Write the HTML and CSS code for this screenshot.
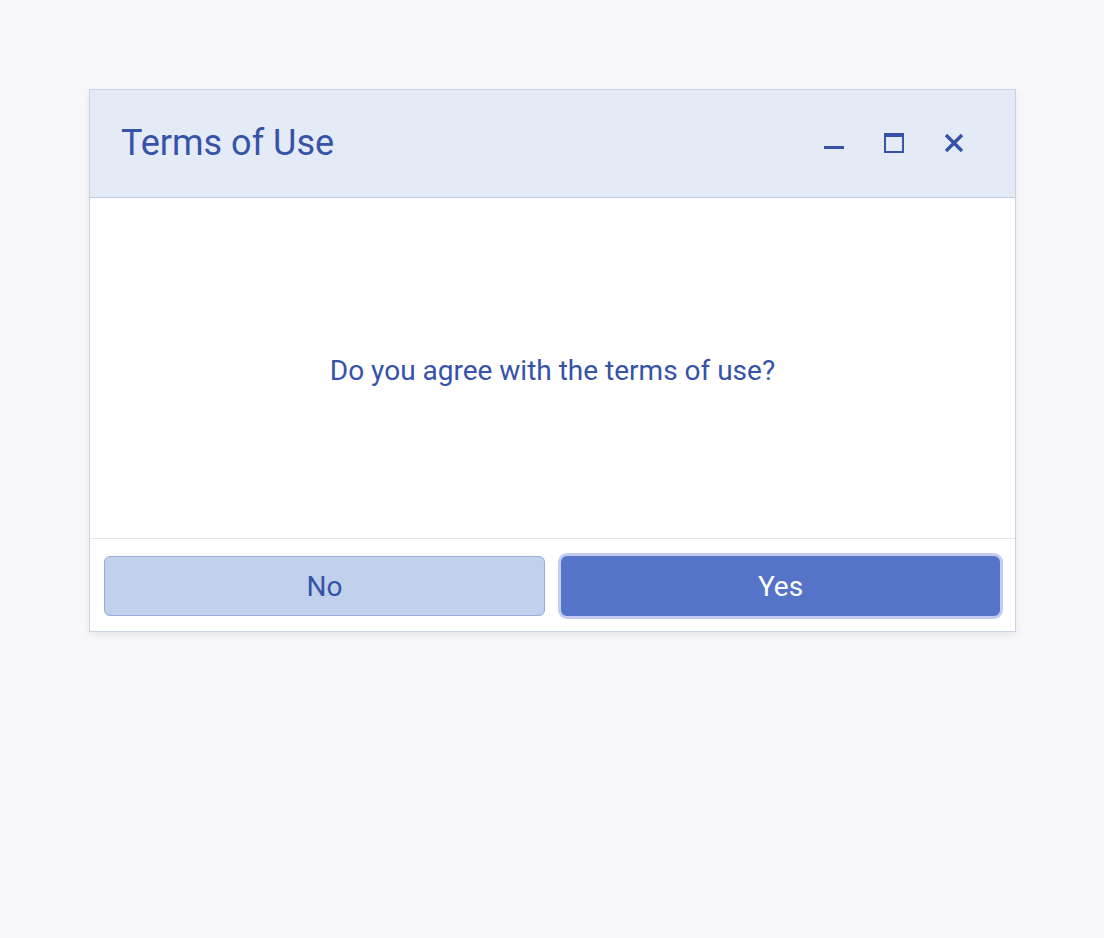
FILE: index.html
```html
<!DOCTYPE html>
<html lang="en">
<head>
  <meta charset="UTF-8">
  <meta name="viewport" content="width=device-width, initial-scale=1.0">
  <title>Terms of Use</title>
  <link rel="stylesheet" href="styles.css">
</head>
<body>
  <div class="dialog">
    <div class="dialog-header">
      <h1 class="dialog-title">Terms of Use</h1>
      <div class="window-btns">
        <button class="icon-btn" title="Minimize">
          <svg width="20" height="20" viewBox="0 0 20 20"><rect x="0" y="13" width="20" height="3" fill="currentColor"/></svg>
        </button>
        <button class="icon-btn" title="Maximize">
          <svg width="20" height="20" viewBox="0 0 20 20"><rect x="1" y="1" width="18" height="18" fill="none" stroke="currentColor" stroke-width="2"/><rect x="0" y="0" width="20" height="4" fill="currentColor"/></svg>
        </button>
        <button class="icon-btn" title="Close">
          <svg width="20" height="20" viewBox="0 0 20 20"><path d="M2 2 L18 18 M18 2 L2 18" stroke="currentColor" stroke-width="3.4" fill="none"/></svg>
        </button>
      </div>
    </div>
    <div class="dialog-body">
      <p>Do you agree with the terms of use?</p>
    </div>
    <div class="dialog-footer">
      <button class="btn btn-no">No</button>
      <button class="btn btn-yes">Yes</button>
    </div>
  </div>
</body>
</html>
```

FILE: styles.css
```css
html, body {
  margin: 0;
  padding: 0;
  height: 100%;
  background-color: #f8f8fa;
  font-family: Roboto, "Liberation Sans", sans-serif;
  color: #3553a8;
}

.dialog {
  margin: 89px 0 0 89px;
  width: 927px;
  box-sizing: border-box;
  border: 1px solid #c8d2e8;
  background-color: white;
  box-shadow: 0 3px 8px rgba(0, 0, 0, 0.07);
}

.dialog-header {
  height: 108px;
  box-sizing: border-box;
  display: flex;
  align-items: center;
  justify-content: space-between;
  padding: 0 51px 2px 31px;
  background-color: #e4eaf6;
  border-bottom: 1px solid #bfcbe4;
}

.dialog-title {
  margin: 0;
  font-size: 36px;
  font-weight: normal;
  color: #3553a8;
}

.window-btns {
  display: flex;
  gap: 40px;
}

.icon-btn {
  width: 20px;
  height: 20px;
  padding: 0;
  border: none;
  background: none;
  color: #3553a8;
  cursor: pointer;
  display: flex;
}

.dialog-body {
  height: 341px;
  box-sizing: border-box;
  padding-top: 4px;
  display: flex;
  align-items: center;
  justify-content: center;
  border-bottom: 1px solid #e6e6e8;
}

.dialog-body p {
  margin: 0;
  font-size: 28px;
}

.dialog-footer {
  display: flex;
  gap: 16px;
  padding: 17px 15px 15px 14px;
}

.btn {
  flex: 1;
  height: 60px;
  border-radius: 6px;
  font-family: Roboto, "Liberation Sans", sans-serif;
  font-size: 28px;
  cursor: pointer;
}

.btn-no {
  background-color: #c1d0eb;
  border: 1px solid #98acd9;
  color: #3553a8;
}

.btn-yes {
  background-color: #5574c8;
  border: none;
  color: white;
  box-shadow: 0 0 0 3px #c4cdf1;
}
```
